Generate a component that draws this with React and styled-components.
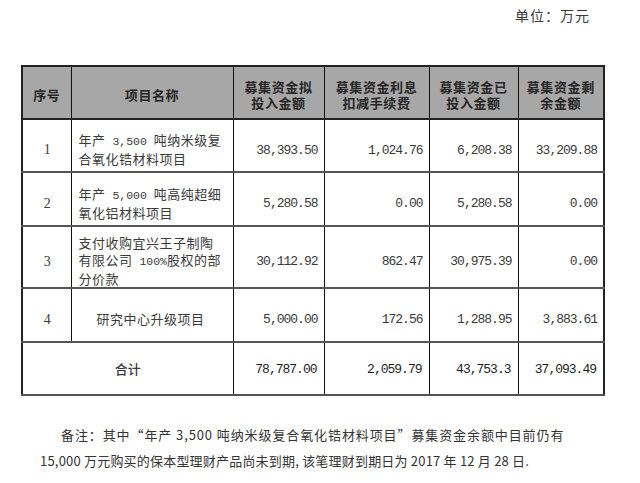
import React from "react";
import styled, { createGlobalStyle } from "styled-components";

const Global = createGlobalStyle`
  html, body { margin: 0; padding: 0; background: #fff; }
  body { font-family: "Noto Sans CJK SC", sans-serif; color: #333; }
`;

const Page = styled.div`
  width: 640px;
  height: 483px;
  box-sizing: border-box;
  padding-top: 8px;
  overflow: hidden;
`;

const Unit = styled.div`
  font-size: 14px;
  line-height: 14px;
  text-align: right;
  padding-right: 50px;
  color: #3a3a3a;
  letter-spacing: 1px;
`;

const Table = styled.table`
  margin: 43px 0 0 21px;
  width: 582px;
  border-collapse: collapse;
  table-layout: fixed;
  border: 2px solid #222;
`;

const Row = styled.tr`
  height: ${(p) => p.$h}px;
`;

const HeadCell = styled.th`
  background: #a7a7a7;
  color: #262626;
  font-weight: 700;
  font-size: 13px;
  line-height: 16px;
  padding: 5px 2px 0;
  text-align: center;
  vertical-align: middle;
  border-left: 1px solid #111;
  border-right: 1px solid #111;
  border-bottom: 2px solid #222;
  letter-spacing: 0.6px;
`;

const Cell = styled.td`
  font-size: 13px;
  line-height: 17px;
  color: #3a3a3a;
  text-align: ${(p) => p.$align || "left"};
  vertical-align: middle;
  padding: ${(p) => (p.$total ? "0 7px" : p.$wide ? "7px 10px 0 7px" : "7px 6px 0 7px")};
  border-left: 1px solid #111;
  border-right: 1px solid #111;
  border-top: 2px solid #555;
  border-bottom: 2px solid #555;
  font-weight: ${(p) => (p.$total ? 500 : 400)};
  word-break: break-all;
`;

const Num = styled.span`
  font-family: "Liberation Mono", monospace;
  font-size: 13px;
  letter-spacing: -1px;
  color: ${(p) => (p.$strong ? "#1e1e1e" : "#3a3a3a")};
`;

const Seq = styled.span`
  font-family: "Liberation Serif", serif;
  font-size: 14px;
`;

const Name = styled.span`
  font-family: "Noto Sans CJK SC", sans-serif;
  font-size: 13px;
  line-height: 17px;
  letter-spacing: 0.5px;
`;

const Digits = styled.span`
  font-family: "Liberation Mono", monospace;
  font-size: 11.5px;
  letter-spacing: 0;
  white-space: pre;
`;

const Note = styled.div`
  margin-top: 26px;
  padding-left: 40px;
  font-size: 13px;
  line-height: 26px;
  color: #333;
`;

const NoteLine = styled.div`
  white-space: nowrap;
  padding-left: ${(p) => p.$indent || 0}px;
  letter-spacing: ${(p) => p.$ls}px;
`;

const rows = [
  { seq: "1", name: ["年产", " 3,500 ", "吨纳米级复合氧化锆材料项目"], h: 53, v: ["38,393.50", "1,024.76", "6,208.38", "33,209.88"] },
  { seq: "2", name: ["年产", " 5,000 ", "吨高纯超细氧化铝材料项目"], h: 54, v: ["5,280.58", "0.00", "5,280.58", "0.00"] },
  { seq: "3", name: ["支付收购宜兴王子制陶有限公司", " 100%", "股权的部分价款"], h: 61, v: ["30,112.92", "862.47", "30,975.39", "0.00"] },
  { seq: "4", name: ["研究中心升级项目"], h: 54, v: ["5,000.00", "172.56", "1,288.95", "3,883.61"], center: true },
];

const widths = [49, 162, 91, 105, 89, 86];

export default function App() {
  return (
    <Page>
      <Global />
      <Unit>单位：万元</Unit>
      <Table>
        <colgroup>
          {widths.map((w, i) => (
            <col key={i} style={{ width: w }} />
          ))}
        </colgroup>
        <thead>
          <Row $h={53}>
            <HeadCell>序号</HeadCell>
            <HeadCell>项目名称</HeadCell>
            <HeadCell>募集资金拟<br />投入金额</HeadCell>
            <HeadCell>募集资金利息<br />扣减手续费</HeadCell>
            <HeadCell>募集资金已<br />投入金额</HeadCell>
            <HeadCell>募集资金剩<br />余金额</HeadCell>
          </Row>
        </thead>
        <tbody>
          {rows.map((r) => (
            <Row key={r.seq} $h={r.h}>
              <Cell $align="center"><Seq>{r.seq}</Seq></Cell>
              <Cell $align={r.center ? "center" : "left"} $wide>
                <Name>
                  {r.name[0]}
                  {r.name[1] && <Digits>{r.name[1]}</Digits>}
                  {r.name[2]}
                </Name>
              </Cell>
              {r.v.map((x, i) => (
                <Cell key={i} $align="right"><Num>{x}</Num></Cell>
              ))}
            </Row>
          ))}
          <Row $h={53}>
            <Cell colSpan={2} $align="center" $total>合计</Cell>
            {["78,787.00", "2,059.79", "43,753.3", "37,093.49"].map((x, i) => (
              <Cell key={i} $align="right" $total><Num $strong>{x}</Num></Cell>
            ))}
          </Row>
        </tbody>
      </Table>
      <Note>
        <NoteLine $indent={21} $ls={0.9}>备注：其中“年产 3,500 吨纳米级复合氧化锆材料项目”募集资金余额中目前仍有</NoteLine>
        <NoteLine $ls={0.2}>15,000 万元购买的保本型理财产品尚未到期, 该笔理财到期日为 2017 年 12 月 28 日.</NoteLine>
      </Note>
    </Page>
  );
}
